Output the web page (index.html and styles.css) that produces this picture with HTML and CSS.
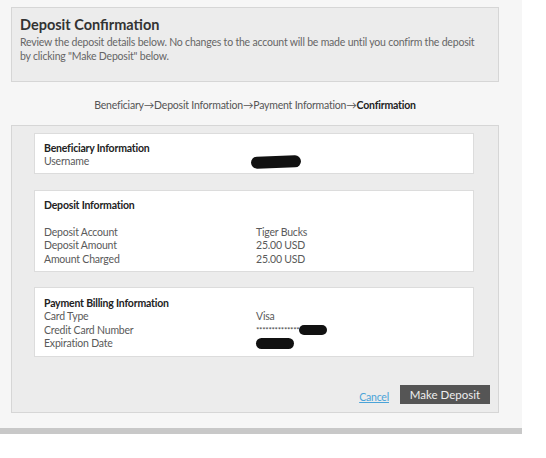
FILE: index.html
```html
<!DOCTYPE html>
<html lang="en">
<head>
<meta charset="UTF-8">
<meta name="viewport" content="width=device-width, initial-scale=1.0">
<title>Deposit Confirmation</title>
<link rel="stylesheet" href="styles.css">
</head>
<body>

<div class="page">
    <div class="header">
        <h1>Deposit Confirmation</h1>
        <p>Review the deposit details below. No changes to the account will be made until you confirm the deposit<br>by clicking "Make Deposit" below.</p>
    </div>

    <div class="steps">Beneficiary&rarr;Deposit Information&rarr;Payment Information&rarr;<b>Confirmation</b></div>

    <div class="panel">
        <div class="cards">
            <div class="card">
                <div class="card-title">Beneficiary Information</div>
                <div class="row"><span class="label">Username</span><span class="value"><span class="blot blot-user"></span></span></div>
            </div>

            <div class="card">
                <div class="card-title spaced">Deposit Information</div>
                <div class="row"><span class="label">Deposit Account</span><span class="value">Tiger Bucks</span></div>
                <div class="row"><span class="label">Deposit Amount</span><span class="value">25.00 USD</span></div>
                <div class="row"><span class="label">Amount Charged</span><span class="value">25.00 USD</span></div>
            </div>

            <div class="card">
                <div class="card-title">Payment Billing Information</div>
                <div class="row"><span class="label">Card Type</span><span class="value">Visa</span></div>
                <div class="row"><span class="label">Credit Card Number</span><span class="value"><span class="stars">**************</span><span class="blot blot-card"></span></span></div>
                <div class="row"><span class="label">Expiration Date</span><span class="value"><span class="blot blot-exp"></span></span></div>
            </div>
        </div>

        <div class="actions">
            <a href="#" class="cancel">Cancel</a>
            <button class="submit">Make Deposit</button>
        </div>
    </div>
</div>
<div class="bottom-bar"></div>

</body>
</html>
```

FILE: styles.css
```css
body {
    font-family: Lato, "Open Sans", sans-serif;
    font-size: 10.5px;
    letter-spacing: -0.2px;
    color: #5a5a5a;
    background-color: #fff;
    margin: 0;
    padding: 0;
}
.page {
    width: 522px;
    box-sizing: border-box;
    background-color: #f6f6f6;
    padding: 7px 23px 15px 11px;
}
.header {
    height: 75px;
    box-sizing: border-box;
    background-color: #ececec;
    border: 1px solid #d6d6d6;
    padding: 8px 8px 0 8px;
}
.header h1 {
    margin: 0;
    font-size: 14.5px;
    line-height: 18px;
    letter-spacing: 0;
    font-weight: bold;
    color: #333;
}
.header p {
    margin: 2px 0 0 0;
    line-height: 13.5px;
    color: #666;
}
.steps {
    text-align: center;
    line-height: 14px;
    margin: 16px 0 13px 0;
    color: #555;
}
.steps b {
    color: #222;
}
.panel {
    background-color: #ececec;
    border: 1px solid #d6d6d6;
    padding: 7px 8px 8px 22px;
}
.cards {
    margin-right: 16px;
}
.card {
    background-color: #fff;
    border: 1px solid #dcdcdc;
    padding: 7px 9px 5px 9px;
    margin-bottom: 15px;
}
.card:first-child {
    padding-bottom: 4px;
    margin-bottom: 16px;
}
.card:last-child {
    padding-top: 8px;
    margin-bottom: 0;
}
.card-title {
    font-weight: bold;
    color: #222;
    line-height: 14px;
}
.card-title.spaced {
    margin-bottom: 14px;
}
.row {
    display: flex;
    line-height: 13.5px;
}
.label {
    width: 212px;
}
.value {
    display: flex;
    align-items: center;
}
.stars {
    font-size: 8px;
    letter-spacing: -0.3px;
    color: #444;
}
.blot {
    display: inline-block;
    background-color: #111;
    border-radius: 6px;
}
.blot-user {
    width: 50px;
    height: 12px;
    margin-left: -5px;
    transform: rotate(-2deg);
}
.blot-card {
    width: 28px;
    height: 10px;
}
.blot-exp {
    width: 38px;
    height: 11px;
}
.actions {
    display: flex;
    justify-content: flex-end;
    align-items: center;
    margin-top: 28px;
}
.cancel {
    color: #4aa3d8;
    text-decoration: underline;
    margin-right: 11px;
    margin-top: 5px;
}
.submit {
    background-color: #555;
    color: #eee;
    border: none;
    height: 19px;
    width: 90px;
    font-family: Lato, "Open Sans", sans-serif;
    font-size: 11.5px;
    padding: 0;
    cursor: pointer;
}
.bottom-bar {
    width: 522px;
    height: 6px;
    background-color: #c8c8c8;
}
```
